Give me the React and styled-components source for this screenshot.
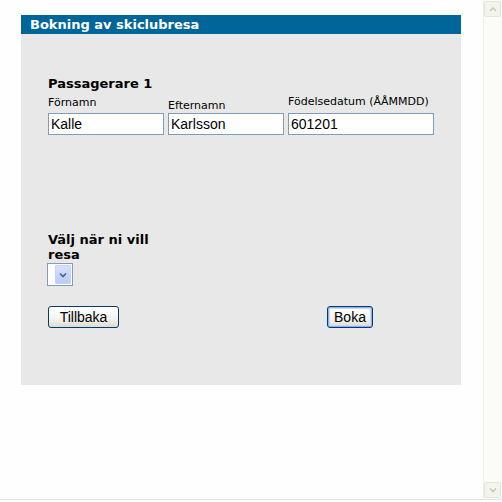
import React from "react";
import styled, { createGlobalStyle } from "styled-components";

const Global = createGlobalStyle`
  html, body { margin: 0; padding: 0; background: #fefefe; overflow: hidden; }
  * { box-sizing: border-box; }
`;

const Frame = styled.div`
  display: flex;
  height: 500px;
  border-bottom: 1px solid #e4e3dc;
`;

const Main = styled.main`
  flex: 1;
  padding: 15px 0 0 21px;
`;

const Panel = styled.section`
  width: 440px;
  height: 370px;
  background: #e8e8e8;
  display: flex;
  flex-direction: column;
`;

const Header = styled.h1`
  margin: 0;
  height: 19px;
  background: #006699;
  color: #fff;
  font: bold 13px/20px "DejaVu Sans", Verdana, sans-serif;
  padding-left: 9px;
`;

const Body = styled.div`
  padding: 42px 0 0 27px;
  display: flex;
  flex-direction: column;
`;

const Heading = styled.h2`
  margin: 0;
  font: bold 13px/15px "DejaVu Sans", Verdana, sans-serif;
  color: #000;
  width: ${(p) => p.$width || "auto"};
`;

const Fields = styled.div`
  display: grid;
  grid-template-columns: 120px 120px auto;
  align-items: end;
  margin-top: 4px;
`;

const Label = styled.label`
  font: 11px/13px "DejaVu Sans", Verdana, sans-serif;
  color: #000;
  padding-bottom: ${(p) => p.$drop}px;
`;

const Input = styled.input`
  width: ${(p) => p.$w}px;
  height: 22px;
  border: 1px solid #7f9db9;
  background: #fff;
  padding: 0 2px;
  margin: 0;
  font: 14px "Liberation Sans", Arial, sans-serif;
  color: #000;
  outline: none;
`;

const TripBlock = styled.div`
  margin-top: 97px;
  display: flex;
  flex-direction: column;
  align-items: flex-start;
`;

const SelectBox = styled.div`
  width: 26px;
  height: 23px;
  margin: 1px 0 0 -1px;
  border: 1px solid #7f9db9;
  background: #fff;
  display: flex;
  justify-content: flex-end;
  padding: 1px;
`;

const DropButton = styled.span`
  width: 16px;
  display: flex;
  align-items: center;
  justify-content: center;
  border-radius: 1px;
  background: linear-gradient(#d6e1fc, #b9cbf6);
  border: 1px solid #c3d2f5;
`;

const ButtonRow = styled.div`
  margin-top: 20px;
  display: grid;
  grid-template-columns: 279px auto;
  align-items: start;
  justify-items: start;
`;

const Button = styled.button`
  height: 22px;
  width: ${(p) => p.$w}px;
  margin: 0;
  padding: 0;
  border: 1px solid #003c74;
  border-radius: 3px;
  background: linear-gradient(#ffffff, #f3f3ef 60%, #dedbd0);
  font: 14px/20px "Liberation Sans", Arial, sans-serif;
  color: #000;
  box-shadow: ${(p) => (p.$default ? "inset 0 0 0 1px #8eb1ec, inset 0 0 0 2px #c9d8f5" : "none")};
`;

const Scrollbar = styled.div`
  width: 19px;
  border-left: 1px solid #efeee6;
  background: #fbfbf7;
  display: flex;
  flex-direction: column;
  justify-content: space-between;
  padding: 1px 1px 1px 0;
`;

const ScrollArrow = styled.div`
  height: 16px;
  width: 17px;
  border: 1px solid #e6e5dc;
  border-radius: 2px;
  background: #f4f4ef;
  display: flex;
  align-items: center;
  justify-content: center;
`;

const Chevron = ({ up, color }) => (
  <svg width="8" height="6" viewBox="0 0 8 6">
    <path
      d={up ? "M1 5 L4 2 L7 5" : "M1 1.5 L4 4.5 L7 1.5"}
      fill="none"
      stroke={color}
      strokeWidth="1.6"
    />
  </svg>
);

export default function App() {
  return (
    <>
      <Global />
      <Frame>
        <Main>
          <Panel>
            <Header>Bokning av skiclubresa</Header>
            <Body>
              <Heading>Passagerare 1</Heading>
              <Fields>
                <Label $drop={4}>Förnamn</Label>
                <Label $drop={1}>Efternamn</Label>
                <Label $drop={5}>Födelsedatum (ÅÅMMDD)</Label>
                <Input $w={116} defaultValue="Kalle" />
                <Input $w={116} defaultValue="Karlsson" />
                <Input $w={146} defaultValue="601201" />
              </Fields>
              <TripBlock>
                <Heading $width="115px">Välj när ni vill resa</Heading>
                <SelectBox>
                  <DropButton>
                    <Chevron color="#4d6185" />
                  </DropButton>
                </SelectBox>
              </TripBlock>
              <ButtonRow>
                <Button $w={71}>Tillbaka</Button>
                <Button $w={46} $default>Boka</Button>
              </ButtonRow>
            </Body>
          </Panel>
        </Main>
        <Scrollbar>
          <ScrollArrow>
            <Chevron up color="#c9c9c0" />
          </ScrollArrow>
          <ScrollArrow>
            <Chevron color="#c9c9c0" />
          </ScrollArrow>
        </Scrollbar>
      </Frame>
    </>
  );
}
